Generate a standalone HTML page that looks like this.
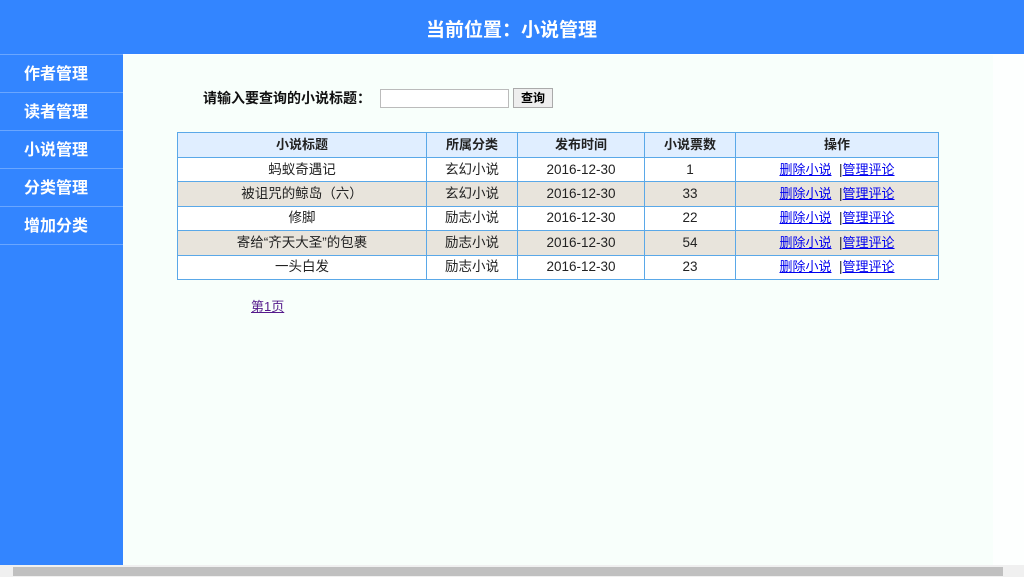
<!DOCTYPE html>
<html><head><meta charset="utf-8"><style>
*{margin:0;padding:0;box-sizing:border-box}
body{width:1024px;height:577px;overflow:hidden;background:#fff;font-family:"Liberation Sans","Noto Sans CJK SC",sans-serif;position:relative}
.hd{position:absolute;left:0;top:0;width:1024px;height:54px;background:#3385ff;color:#fff;font-size:19px;font-weight:bold}
.hd span{position:absolute;left:426px;top:17px;line-height:28px}
.sb{position:absolute;left:0;top:54px;width:123px;height:511px;background:#3385ff;border-top:1px solid #6aa6ff}
.sb div{height:38px;border-bottom:1px solid #6aa6ff;color:#fff;font-weight:bold;font-size:16px;line-height:40px;padding-left:24px}
.ct{position:absolute;left:123px;top:55px;width:870px;height:510px;background:#f8fffb}
.rs{position:absolute;left:993px;top:55px;width:31px;height:510px;background:#fdfffe}
.sc{position:absolute;left:0;top:565px;width:1024px;height:12px;background:#f0f0f0}
.sc div{position:absolute;left:13px;top:2px;width:990px;height:9px;background:#c0c0c0}
.lb{position:absolute;left:203px;top:88px;font-size:14px;font-weight:bold;color:#111}
.in{position:absolute;left:380px;top:89px;width:129px;height:19px;border:1px solid #bbb;background:#fff}
.bt{position:absolute;left:513px;top:88px;width:40px;height:20px;border:1px solid #aaa;background:#eee;font-size:12px;text-align:center;line-height:18px;font-weight:bold}
table{position:absolute;left:177px;top:132px;width:762px;border-collapse:collapse;font-size:13.5px;color:#222}
td,th{border:1px solid #5aa8e8;text-align:center;height:24.4px;padding:0;line-height:22px}
th{background:#e0eeff;height:25px;font-size:13px}
tr.g td{background:#e8e4dc}
tr.w td{background:#fff}
a{color:#00e;text-decoration:underline;font-size:13px}
.pg{position:absolute;left:251px;top:296px;font-size:13px;color:#551a8b;text-decoration:underline}
</style></head><body>
<div class="hd"><span>当前位置：小说管理</span></div>
<div class="sb"><div>作者管理</div><div>读者管理</div><div>小说管理</div><div>分类管理</div><div>增加分类</div></div>
<div class="ct"></div><div class="rs"></div>
<div class="sc"><div></div></div>
<div class="lb">请输入要查询的小说标题：</div>
<div class="in"></div><div class="bt">查询</div>
<table>
<tr><th style="width:249px">小说标题</th><th style="width:91px">所属分类</th><th style="width:127px">发布时间</th><th style="width:91px">小说票数</th><th>操作</th></tr>
<tr class="w"><td>蚂蚁奇遇记</td><td>玄幻小说</td><td>2016-12-30</td><td>1</td><td><a>删除小说</a> &nbsp;|<a>管理评论</a></td></tr>
<tr class="g"><td>被诅咒的鲸岛（六）</td><td>玄幻小说</td><td>2016-12-30</td><td>33</td><td><a>删除小说</a> &nbsp;|<a>管理评论</a></td></tr>
<tr class="w"><td>修脚</td><td>励志小说</td><td>2016-12-30</td><td>22</td><td><a>删除小说</a> &nbsp;|<a>管理评论</a></td></tr>
<tr class="g"><td>寄给“齐天大圣”的包裹</td><td>励志小说</td><td>2016-12-30</td><td>54</td><td><a>删除小说</a> &nbsp;|<a>管理评论</a></td></tr>
<tr class="w"><td>一头白发</td><td>励志小说</td><td>2016-12-30</td><td>23</td><td><a>删除小说</a> &nbsp;|<a>管理评论</a></td></tr>
</table>
<div class="pg">第1页</div>
</body></html>
